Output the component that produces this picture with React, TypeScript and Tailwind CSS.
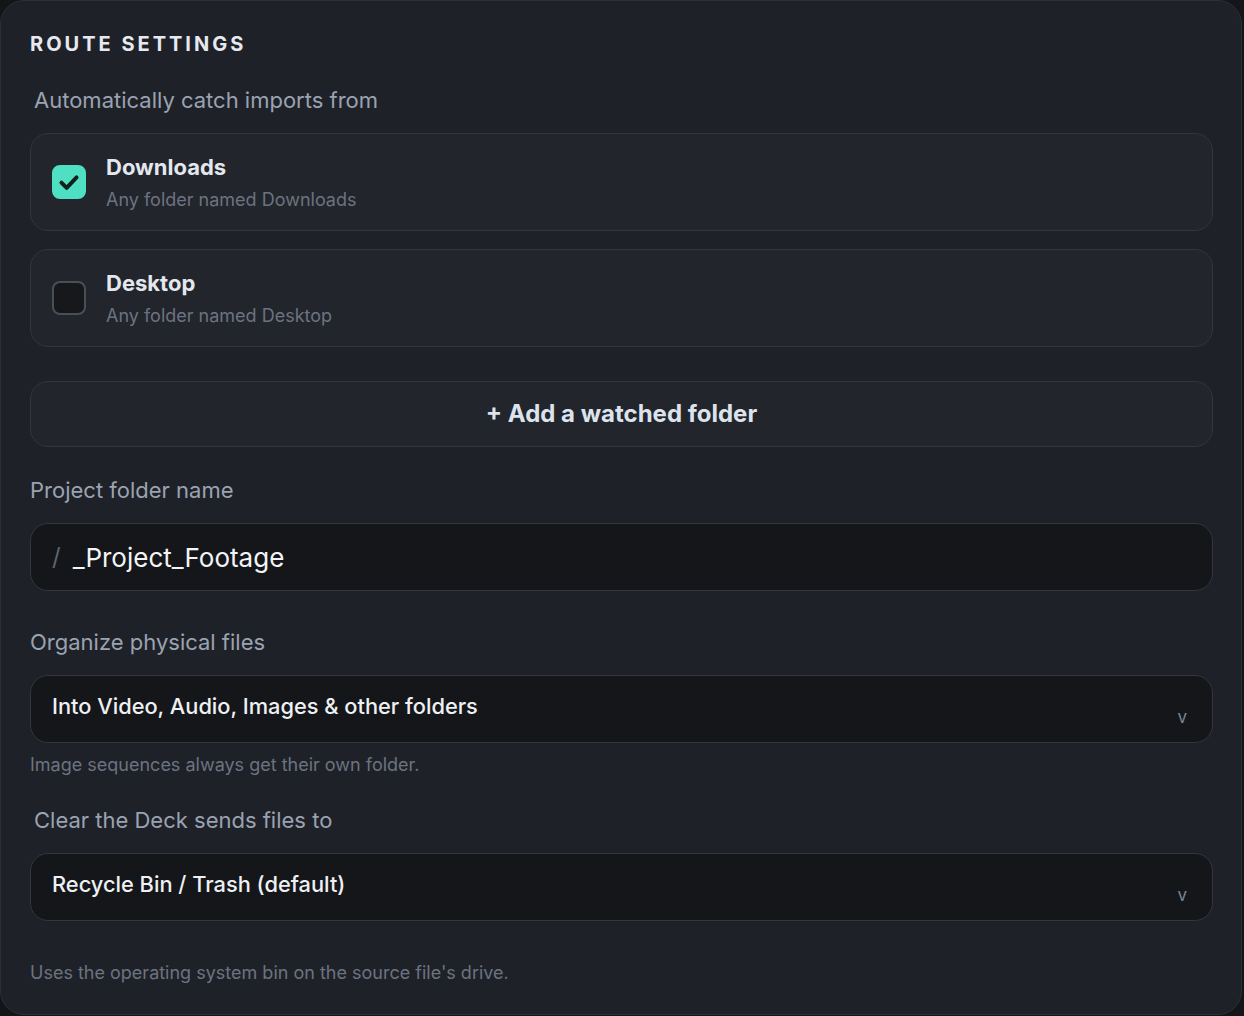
import { useState } from "react";

const font = { fontFamily: "Inter, 'Noto Sans', sans-serif" };

function WatchCard({
  title,
  hint,
  checked,
  onToggle,
}: {
  title: string;
  hint: string;
  checked: boolean;
  onToggle: () => void;
}) {
  return (
    <div className="flex h-[98px] items-center gap-5 rounded-[18px] border border-[#33363d] bg-[#22252c] pl-[21px]">
      <button
        onClick={onToggle}
        className={`flex h-[34px] w-[34px] shrink-0 items-center justify-center rounded-lg border-2 ${
          checked ? "border-[#4fe0c4] bg-[#4fe0c4]" : "border-[#4a4e57] bg-[#16181c]"
        }`}
      >
        {checked && (
          <svg viewBox="0 0 24 24" className="h-[28px] w-[28px]" fill="none" stroke="#12211d" strokeWidth="3.4" strokeLinecap="round" strokeLinejoin="round">
            <path d="M5.5 12.5l4.5 4.5L18.5 8" />
          </svg>
        )}
      </button>
      <div className="flex flex-col">
        <span className="text-[22px] font-bold leading-[28px] text-[#e4e8ee]">{title}</span>
        <span className="mt-[7px] text-[18px] leading-[24px] text-[#6c7380]">{hint}</span>
      </div>
    </div>
  );
}

function SelectBox({ value }: { value: string }) {
  return (
    <div className="relative mt-[19px] flex h-[68px] items-center rounded-[18px] border border-[#33363d] bg-[#14161a] pb-[5px] pl-[21px] pr-5">
      <span className="text-[21.8px] font-medium text-[#eef0f3]">{value}</span>
      <span className="absolute right-[25px] top-[31px] text-[17px] leading-[20px] text-[#7d8491]">v</span>
    </div>
  );
}

export default function App() {
  const [downloads, setDownloads] = useState(true);
  const [desktop, setDesktop] = useState(false);

  return (
    <div className="min-h-screen bg-[#141518]" style={font}>
      <div className="flex h-[1015px] w-[1242px] flex-col rounded-[24px] border border-[#2c2f36] bg-[#1f2128] pl-[29px] pr-[28px] pt-[29px]">
        <h2 className="text-[20px] font-bold leading-[28px] tracking-[0.15em] text-[#e6eaf0]">ROUTE SETTINGS</h2>

        <p className="mt-[28px] pl-1 text-[22px] leading-[28px] text-[#9aa3b1]">Automatically catch imports from</p>

        <div className="mt-[19px] flex flex-col gap-[18px]">
          <WatchCard title="Downloads" hint="Any folder named Downloads" checked={downloads} onToggle={() => setDownloads(!downloads)} />
          <WatchCard title="Desktop" hint="Any folder named Desktop" checked={desktop} onToggle={() => setDesktop(!desktop)} />
        </div>

        <button className="mt-[34px] h-[66px] rounded-[18px] border border-[#33363d] bg-[#22252c] text-[24px] font-bold text-[#dde3ec]">
          + Add a watched folder
        </button>

        <p className="mt-[29px] text-[22px] leading-[28px] text-[#9aa3b1]">Project folder name</p>
        <div className="mt-[19px] flex h-[68px] items-center gap-3 rounded-[18px] border border-[#33363d] bg-[#14161a] pl-[21px] pr-5">
          <span className="text-[24px] text-[#5f6570]">/</span>
          <span className="text-[26px] text-[#f3f4f6]">_Project_Footage</span>
        </div>

        <p className="mt-[37px] text-[22px] leading-[28px] text-[#9aa3b1]">Organize physical files</p>
        <SelectBox value="Into Video, Audio, Images & other folders" />
        <p className="mt-[10px] text-[18px] leading-[24px] text-[#6c7380]">Image sequences always get their own folder.</p>

        <p className="mt-[29px] pl-1 text-[22px] leading-[28px] text-[#9aa3b1]">Clear the Deck sends files to</p>
        <SelectBox value="Recycle Bin / Trash (default)" />
        <p className="mt-[40px] text-[18px] leading-[24px] text-[#6c7380]">Uses the operating system bin on the source file's drive.</p>
      </div>
    </div>
  );
}
